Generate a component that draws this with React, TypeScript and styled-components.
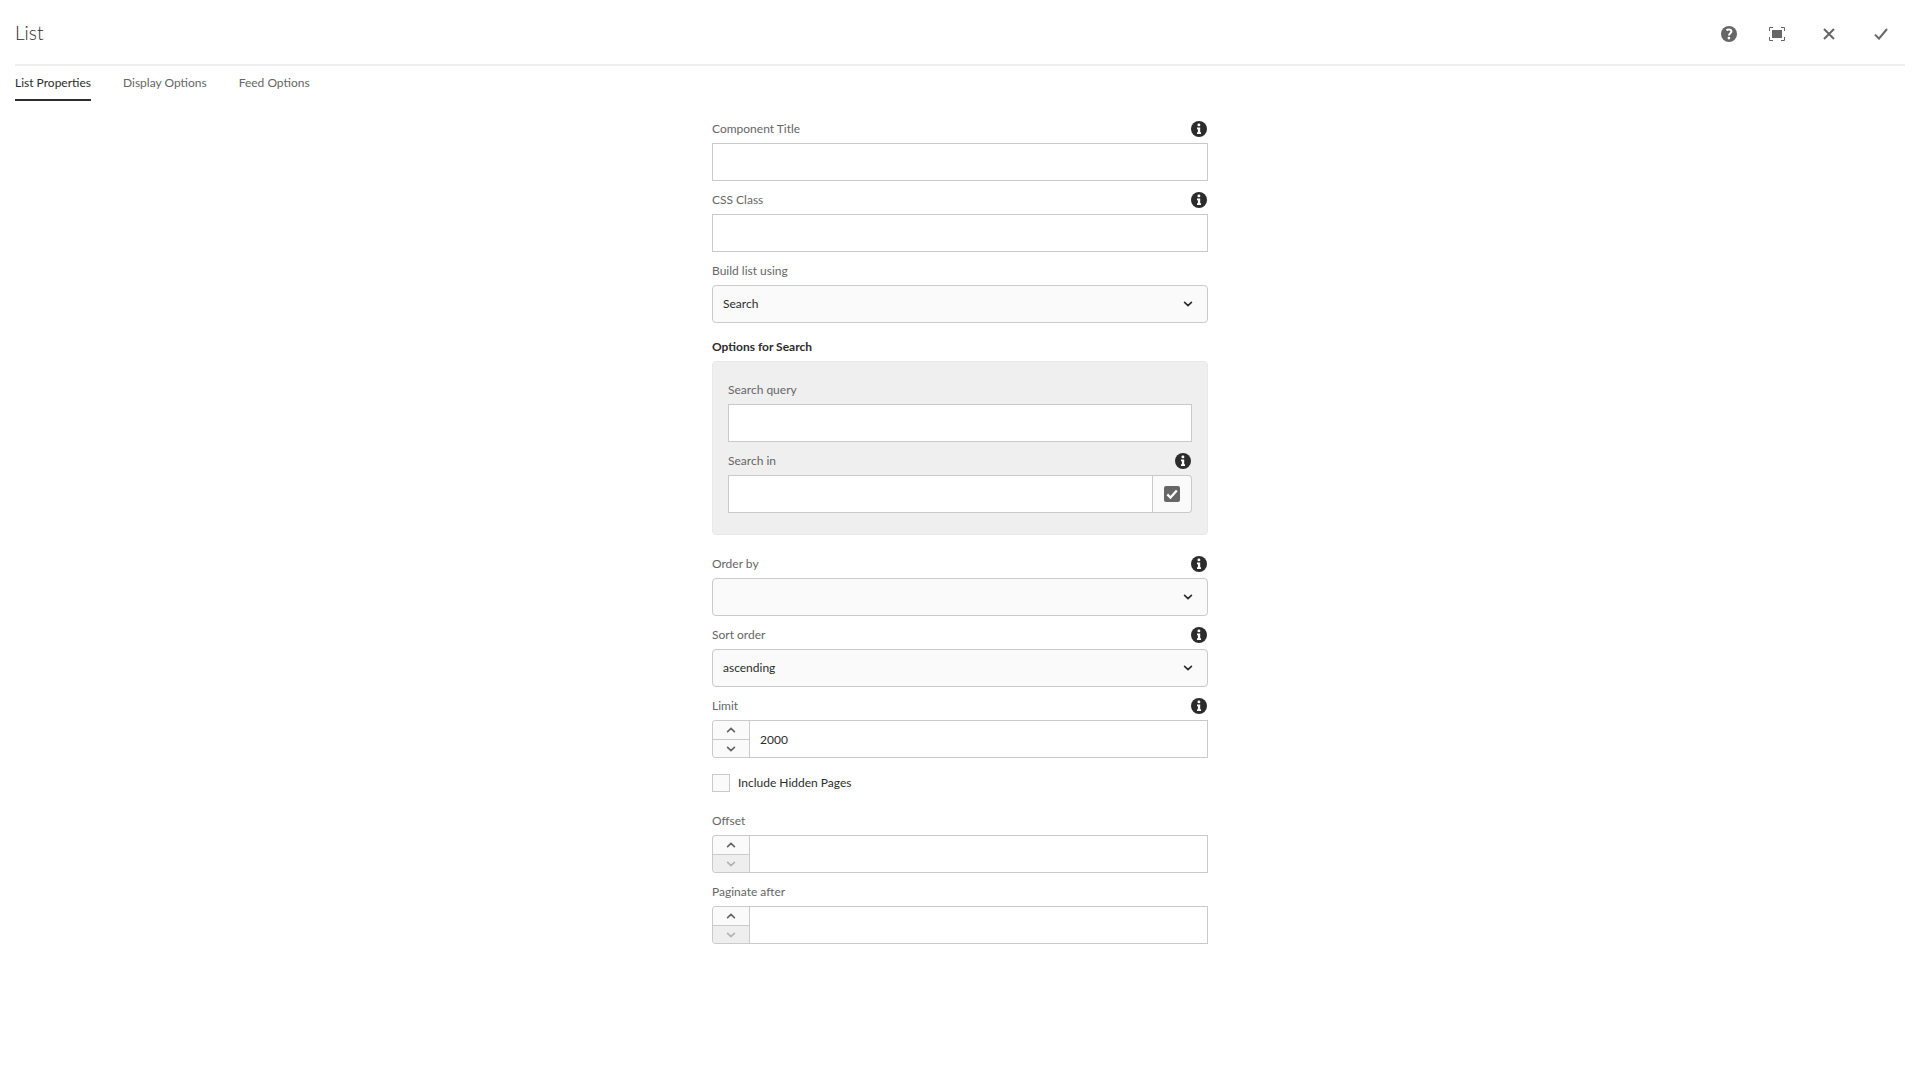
import React, { useId, useState } from "react";
import styled, { createGlobalStyle } from "styled-components";

const ink = "#2c2c2c";
const muted = "#666";
const line = "#cacaca";
const soft = "#fafafa";

const GlobalStyle = createGlobalStyle`
  *, *::before, *::after { box-sizing: border-box; }
  body {
    margin: 0;
    background: #fff;
    color: ${ink};
    font: 12px/20px Lato, "Open Sans", sans-serif;
  }
  button, input, select { font: inherit; color: inherit; }
  input:focus-visible, select:focus-visible, button:focus-visible {
    outline: 2px solid #2680eb;
  }
`;

const Page = styled.div`
  padding: 0 15px 32px;
`;

const Header = styled.header`
  display: flex;
  align-items: center;
  justify-content: space-between;
  height: 66px;
  padding-top: 4px;
  border-bottom: 2px solid #eee;
`;

const Title = styled.h1`
  margin: 0;
  padding-bottom: 2px;
  font-size: 19px;
  font-weight: 300;
  line-height: 24px;
`;

const Actions = styled.div`
  display: flex;
  gap: 4px;
`;

const ActionGroup = styled.div`
  display: flex;
`;

const ActionButton = styled.button`
  display: grid;
  place-items: center;
  width: 48px;
  height: 40px;
  padding: 0;
  border: 0;
  background: none;
  color: ${muted};
  cursor: pointer;
`;

const Tabs = styled.div`
  display: flex;
  gap: 32px;
`;

const Tab = styled.button<{ $active: boolean }>`
  height: 35px;
  padding: 0;
  border: 0;
  border-bottom: 2px solid ${(p) => (p.$active ? ink : "transparent")};
  background: none;
  color: ${(p) => (p.$active ? ink : muted)};
  cursor: pointer;
`;

const Form = styled.form`
  max-width: 496px;
  margin: 15px auto 0;
`;

const FieldBox = styled.div`
  margin-bottom: 6px;
`;

const LabelRow = styled.div`
  display: flex;
  align-items: center;
  justify-content: space-between;
  height: 27px;
  padding: 0 1px 1px 0;
`;

const Label = styled.label`
  color: ${muted};
`;

const InfoButton = styled.button`
  display: grid;
  padding: 0;
  border: 0;
  border-radius: 50%;
  background: none;
  cursor: pointer;
`;

const TextInput = styled.input`
  display: block;
  width: 100%;
  min-width: 0;
  height: 38px;
  padding: 0 10px;
  border: 1px solid ${line};
  border-radius: 0;
  background: #fff;
`;

const SelectWrap = styled.div`
  display: grid;
  align-items: center;

  > * { grid-area: 1 / 1; }
  > svg {
    justify-self: end;
    margin-right: 15px;
    pointer-events: none;
  }
`;

const Select = styled.select`
  appearance: none;
  width: 100%;
  height: 38px;
  padding: 0 32px 0 10px;
  border: 1px solid ${line};
  border-radius: 4px;
  background: ${soft};
`;

const GroupTitle = styled.h2`
  margin: 0;
  padding: 8px 0 4px;
  font-size: 12px;
  font-weight: 700;
  line-height: 20px;
`;

const Panel = styled.section`
  margin-bottom: 16px;
  padding: 15px;
  border: 1px solid #e8e8e8;
  border-radius: 4px;
  background: #efefef;
`;

const InputGroup = styled.div`
  display: flex;
`;

const PickButton = styled.button`
  display: grid;
  flex: none;
  place-items: center;
  width: 39px;
  height: 38px;
  padding: 0;
  border: 1px solid ${line};
  border-left: 0;
  border-radius: 0 4px 4px 0;
  background: ${soft};
  color: ${muted};
  cursor: pointer;
`;

const Stepper = styled.div`
  display: grid;
  flex: none;
  grid-template-rows: 19px 17px;
  width: 37px;
  height: 38px;
  overflow: hidden;
  border: 1px solid ${line};
  border-right: 0;
  border-radius: 4px 0 0 4px;
`;

const StepButton = styled.button`
  display: grid;
  place-items: center;
  padding: 0;
  border: 0;
  background: ${soft};
  color: ${muted};

  &:first-child { border-bottom: 1px solid ${line}; }
  &:disabled { background: #eee; color: #b3b3b3; }
`;

const CheckRow = styled.div`
  display: flex;
  align-items: center;
  gap: 8px;
  height: 38px;
  margin-bottom: 6px;
`;

const Checkbox = styled.input`
  appearance: none;
  width: 18px;
  height: 18px;
  margin: 0;
  border: 1px solid ${line};
  background: ${soft};

  &:checked { background: ${muted}; box-shadow: inset 0 0 0 3px #fff; }
`;

const Chevron = ({ up = false, color = "currentColor" }: { up?: boolean; color?: string }) => (
  <svg width="10" height="6" viewBox="0 0 10 6" fill="none" aria-hidden="true">
    <path
      d={up ? "M1.6 4.7 5 1.5 8.4 4.7" : "M1.6 1.3 5 4.5 8.4 1.3"}
      stroke={color}
      strokeWidth="1.7"
      strokeLinecap="round"
    />
  </svg>
);

const InfoIcon = () => (
  <svg width="16" height="16" viewBox="0 0 16 16" aria-hidden="true">
    <circle cx="8" cy="8" r="8" fill={ink} />
    <circle cx="7.9" cy="3.9" r="1.45" fill="#fff" />
    <path d="M6 6.5h3.2v4.7H10V13H6v-1.8h.9V8.2H6z" fill="#fff" />
  </svg>
);

const HelpIcon = () => (
  <svg width="16" height="16" viewBox="0 0 16 16" aria-hidden="true">
    <circle cx="8" cy="8" r="8" fill="currentColor" />
    <path
      d="M5.4 4.3C6.2 3.7 7 3.4 8 3.4c1.5 0 2.4.8 2.4 2 0 1.7-2.4 1.9-2.4 4"
      fill="none"
      stroke="#fff"
      strokeWidth="2"
    />
    <circle cx="7.9" cy="12.1" r="1.35" fill="#fff" />
  </svg>
);

const FullScreenIcon = () => (
  <svg width="16" height="14" viewBox="0 0 16 14" aria-hidden="true">
    <rect x="3" y="3" width="10" height="8" fill="currentColor" />
    <path
      d="M.5 4V.5H4M12 .5h3.5V4M15.5 10v3.5H12M4 13.5H.5V10"
      fill="none"
      stroke="currentColor"
    />
  </svg>
);

const CloseIcon = () => (
  <svg width="12" height="12" viewBox="0 0 12 12" aria-hidden="true">
    <path d="m1 1 10 10M11 1 1 11" stroke="currentColor" strokeWidth="2" />
  </svg>
);

const DoneIcon = () => (
  <svg width="14" height="12" viewBox="0 0 14 12" fill="none" aria-hidden="true">
    <path d="m1 6.6 4 4L13 1" stroke="currentColor" strokeWidth="2" />
  </svg>
);

const SelectIcon = () => (
  <svg width="16" height="16" viewBox="0 0 16 16" fill="none" aria-hidden="true">
    <rect width="16" height="16" rx="2" fill="currentColor" />
    <path d="m3.3 8.4 3.2 3.2 6.3-7" stroke="#fff" strokeWidth="2.2" />
  </svg>
);

type FieldProps = {
  label: string;
  info?: boolean;
  children: (id: string) => React.ReactNode;
};

const Field = ({ label, info, children }: FieldProps) => {
  const id = useId();
  return (
    <FieldBox>
      <LabelRow>
        <Label htmlFor={id}>{label}</Label>
        {info && (
          <InfoButton type="button" aria-label={`About ${label}`}>
            <InfoIcon />
          </InfoButton>
        )}
      </LabelRow>
      {children(id)}
    </FieldBox>
  );
};

const TextField = ({ label, info }: { label: string; info?: boolean }) => (
  <Field label={label} info={info}>
    {(id) => <TextInput id={id} type="text" />}
  </Field>
);

const SelectField = ({ label, info, options }: { label: string; info?: boolean; options: string[] }) => (
  <Field label={label} info={info}>
    {(id) => (
      <SelectWrap>
        <Select id={id}>
          {options.map((option) => (
            <option key={option}>{option}</option>
          ))}
        </Select>
        <Chevron color={ink} />
      </SelectWrap>
    )}
  </Field>
);

const NumberField = ({ label, info, initial = "" }: { label: string; info?: boolean; initial?: string }) => {
  const [value, setValue] = useState(initial);
  const step = (by: number) => setValue(String(Number(value) + by));
  return (
    <Field label={label} info={info}>
      {(id) => (
        <InputGroup>
          <Stepper>
            <StepButton type="button" aria-label={`Increase ${label}`} onClick={() => step(1)}>
              <Chevron up />
            </StepButton>
            <StepButton
              type="button"
              aria-label={`Decrease ${label}`}
              disabled={Number(value) <= 0}
              onClick={() => step(-1)}
            >
              <Chevron />
            </StepButton>
          </Stepper>
          <TextInput
            id={id}
            type="text"
            inputMode="numeric"
            value={value}
            onChange={(e) => setValue(e.target.value)}
          />
        </InputGroup>
      )}
    </Field>
  );
};

const tabNames = ["List Properties", "Display Options", "Feed Options"];

export default function App() {
  const [tab, setTab] = useState(tabNames[0]);
  return (
    <>
      <GlobalStyle />
      <Page>
        <Header>
          <Title>List</Title>
          <Actions>
            <ActionGroup>
              <ActionButton type="button" aria-label="Help"><HelpIcon /></ActionButton>
              <ActionButton type="button" aria-label="Toggle full screen"><FullScreenIcon /></ActionButton>
            </ActionGroup>
            <ActionButton type="button" aria-label="Cancel"><CloseIcon /></ActionButton>
            <ActionButton type="submit" form="list-form" aria-label="Done"><DoneIcon /></ActionButton>
          </Actions>
        </Header>
        <Tabs role="tablist">
          {tabNames.map((name) => (
            <Tab
              key={name}
              type="button"
              role="tab"
              aria-selected={tab === name}
              $active={tab === name}
              onClick={() => setTab(name)}
            >
              {name}
            </Tab>
          ))}
        </Tabs>
        <Form id="list-form" onSubmit={(e) => e.preventDefault()}>
          <TextField label="Component Title" info />
          <TextField label="CSS Class" info />
          <SelectField label="Build list using" options={["Search"]} />
          <GroupTitle id="search-options">Options for Search</GroupTitle>
          <Panel aria-labelledby="search-options">
            <TextField label="Search query" />
            <Field label="Search in" info>
              {(id) => (
                <InputGroup>
                  <TextInput id={id} type="text" />
                  <PickButton type="button" aria-label="Open selection dialog"><SelectIcon /></PickButton>
                </InputGroup>
              )}
            </Field>
          </Panel>
          <SelectField label="Order by" info options={[""]} />
          <SelectField label="Sort order" info options={["ascending", "descending"]} />
          <NumberField label="Limit" info initial="2000" />
          <CheckRow>
            <Checkbox id="hidden-pages" type="checkbox" />
            <label htmlFor="hidden-pages">Include Hidden Pages</label>
          </CheckRow>
          <NumberField label="Offset" />
          <NumberField label="Paginate after" />
        </Form>
      </Page>
    </>
  );
}
